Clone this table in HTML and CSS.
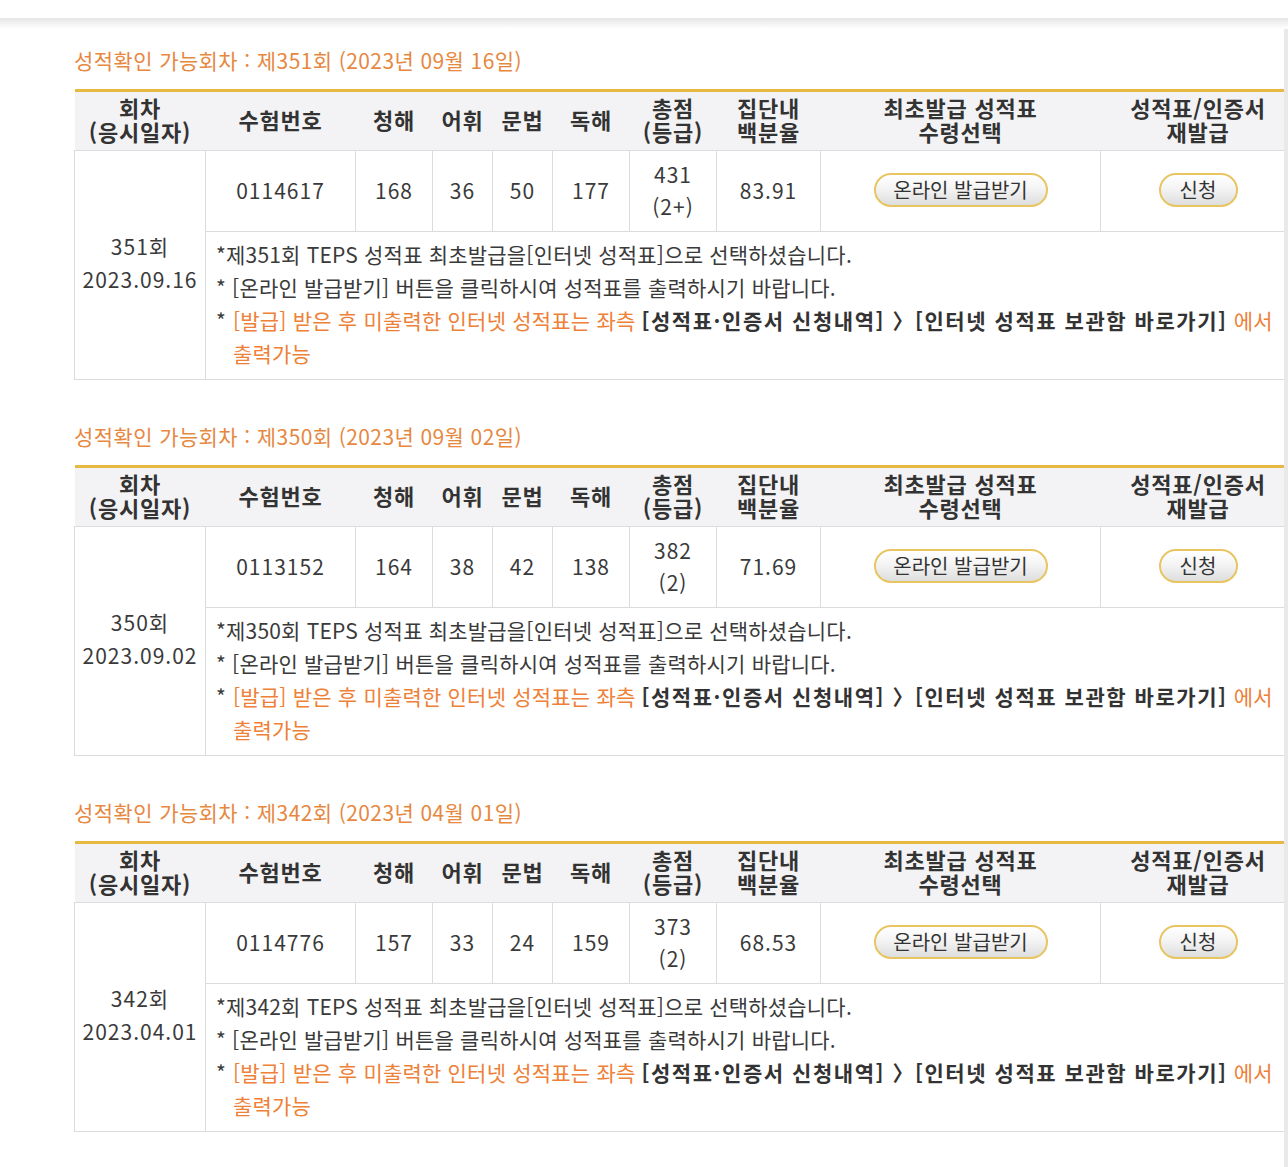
FILE: index.html
```html
<!DOCTYPE html>
<html lang="ko">
<head>
<meta charset="utf-8">
<title>성적확인</title>
<link rel="stylesheet" href="styles.css">
</head>
<body>
<div class="topbar"></div>
<div class="edge"></div>
<main class="page">

<section class="block">
  <h2 class="block-title">성적확인 가능회차 : 제351회 (2023년 09월 16일)</h2>
  <table class="score">
    <colgroup>
      <col class="c1"><col class="c2"><col class="c3"><col class="c4"><col class="c5"><col class="c6"><col class="c7"><col class="c8"><col class="c9"><col class="c10">
    </colgroup>
    <thead>
      <tr>
        <th>회차<br>(응시일자)</th><th>수험번호</th><th>청해</th><th>어휘</th><th>문법</th><th>독해</th><th>총점<br>(등급)</th><th>집단내<br>백분율</th><th>최초발급 성적표<br>수령선택</th><th>성적표/인증서<br>재발급</th>
      </tr>
    </thead>
    <tbody>
      <tr class="data">
        <td rowspan="2" class="round">351회<br>2023.09.16</td>
        <td>0114617</td><td>168</td><td>36</td><td>50</td><td>177</td><td class="total">431<br>(2+)</td><td>83.91</td>
        <td><button class="pill wide">온라인 발급받기</button></td>
        <td><button class="pill">신청</button></td>
      </tr>
      <tr>
        <td colspan="9" class="notes">
          <p>*제351회 TEPS 성적표 최초발급을[인터넷 성적표]으로 선택하셨습니다.</p>
          <p>* [온라인 발급받기] 버튼을 클릭하시여 성적표를 출력하시기 바랍니다.</p>
          <p class="hang"><span class="star">*</span><span class="orange">[발급] 받은 후 미출력한 인터넷 성적표는 좌측 <b class="dark">[성적표·인증서 신청내역] 〉[인터넷 성적표 보관함 바로가기]</b> 에서<br>출력가능</span></p>
        </td>
      </tr>
    </tbody>
  </table>
</section>

<section class="block">
  <h2 class="block-title">성적확인 가능회차 : 제350회 (2023년 09월 02일)</h2>
  <table class="score">
    <colgroup>
      <col class="c1"><col class="c2"><col class="c3"><col class="c4"><col class="c5"><col class="c6"><col class="c7"><col class="c8"><col class="c9"><col class="c10">
    </colgroup>
    <thead>
      <tr>
        <th>회차<br>(응시일자)</th><th>수험번호</th><th>청해</th><th>어휘</th><th>문법</th><th>독해</th><th>총점<br>(등급)</th><th>집단내<br>백분율</th><th>최초발급 성적표<br>수령선택</th><th>성적표/인증서<br>재발급</th>
      </tr>
    </thead>
    <tbody>
      <tr class="data">
        <td rowspan="2" class="round">350회<br>2023.09.02</td>
        <td>0113152</td><td>164</td><td>38</td><td>42</td><td>138</td><td class="total">382<br>(2)</td><td>71.69</td>
        <td><button class="pill wide">온라인 발급받기</button></td>
        <td><button class="pill">신청</button></td>
      </tr>
      <tr>
        <td colspan="9" class="notes">
          <p>*제350회 TEPS 성적표 최초발급을[인터넷 성적표]으로 선택하셨습니다.</p>
          <p>* [온라인 발급받기] 버튼을 클릭하시여 성적표를 출력하시기 바랍니다.</p>
          <p class="hang"><span class="star">*</span><span class="orange">[발급] 받은 후 미출력한 인터넷 성적표는 좌측 <b class="dark">[성적표·인증서 신청내역] 〉[인터넷 성적표 보관함 바로가기]</b> 에서<br>출력가능</span></p>
        </td>
      </tr>
    </tbody>
  </table>
</section>

<section class="block">
  <h2 class="block-title">성적확인 가능회차 : 제342회 (2023년 04월 01일)</h2>
  <table class="score">
    <colgroup>
      <col class="c1"><col class="c2"><col class="c3"><col class="c4"><col class="c5"><col class="c6"><col class="c7"><col class="c8"><col class="c9"><col class="c10">
    </colgroup>
    <thead>
      <tr>
        <th>회차<br>(응시일자)</th><th>수험번호</th><th>청해</th><th>어휘</th><th>문법</th><th>독해</th><th>총점<br>(등급)</th><th>집단내<br>백분율</th><th>최초발급 성적표<br>수령선택</th><th>성적표/인증서<br>재발급</th>
      </tr>
    </thead>
    <tbody>
      <tr class="data">
        <td rowspan="2" class="round">342회<br>2023.04.01</td>
        <td>0114776</td><td>157</td><td>33</td><td>24</td><td>159</td><td class="total">373<br>(2)</td><td>68.53</td>
        <td><button class="pill wide">온라인 발급받기</button></td>
        <td><button class="pill">신청</button></td>
      </tr>
      <tr>
        <td colspan="9" class="notes">
          <p>*제342회 TEPS 성적표 최초발급을[인터넷 성적표]으로 선택하셨습니다.</p>
          <p>* [온라인 발급받기] 버튼을 클릭하시여 성적표를 출력하시기 바랍니다.</p>
          <p class="hang"><span class="star">*</span><span class="orange">[발급] 받은 후 미출력한 인터넷 성적표는 좌측 <b class="dark">[성적표·인증서 신청내역] 〉[인터넷 성적표 보관함 바로가기]</b> 에서<br>출력가능</span></p>
        </td>
      </tr>
    </tbody>
  </table>
</section>

</main>
</body>
</html>
```

FILE: styles.css
```css
html, body {
  margin: 0;
  padding: 0;
  background: #fff;
  overflow: hidden;
}
body {
  font-family: "Noto Sans CJK KR", "Noto Sans", sans-serif;
  color: #333;
  width: 1288px;
}
.topbar {
  height: 18px;
  background: #fff;
  border-bottom: 1px solid #e2e2e2;
}
.topbar::after {
  content: "";
  display: block;
  position: relative;
  top: 18px;
  height: 11px;
  background: linear-gradient(#e6e6e6, #ffffff);
}
.edge {
  position: fixed;
  right: 0;
  top: 29px;
  bottom: 0;
  width: 4px;
  background: #e9e9e9;
}
.page {
  padding: 27px 0 0 74px;
}
.block {
  margin-bottom: 42px;
}
.block-title {
  margin: 0 0 15px;
  font-size: 21px;
  line-height: 28px;
  font-weight: 400;
  color: #e6883f;
  letter-spacing: 0.4px;
}
.score {
  width: 1221px;
  table-layout: fixed;
  border-collapse: collapse;
  border-top: 3px solid #e8b845;
  font-size: 21px;
}
.c1 { width: 131px; }
.c2 { width: 150px; }
.c3 { width: 77px; }
.c4 { width: 60px; }
.c5 { width: 60px; }
.c6 { width: 77px; }
.c7 { width: 87px; }
.c8 { width: 104px; }
.c9 { width: 280px; }
.c10 { width: 195px; }
.score th {
  background: #f3f3f5;
  font-weight: 700;
  font-size: 22px;
  letter-spacing: 0.8px;
  line-height: 24px;
  height: 60px;
  padding: 0 0 5px;
  box-sizing: border-box;
  text-align: center;
  color: #333;
  border-bottom: 1px solid #dcdcdc;
}
.score td {
  border: 1px solid #dcdcdc;
  text-align: center;
  padding: 0;
  color: #3a3a3a;
  font-weight: 400;
  letter-spacing: 1px;
}
.score tr.data td {
  height: 81px;
  box-sizing: border-box;
  padding-bottom: 3px;
  line-height: 32px;
}
.score tr.data td.round {
  line-height: 33px;
  padding-bottom: 5px;
}
.score td.notes {
  text-align: left;
  padding: 6px 0 9px 10px;
  line-height: 33px;
  color: #3a3a3a;
  letter-spacing: 0.2px;
}
.notes p {
  margin: 0;
}
.hang {
  display: flex;
}
.star {
  width: 17px;
  flex: none;
}
.orange {
  color: #ee8037;
}
.dark {
  color: #333;
  font-weight: 700;
  letter-spacing: 1.55px;
}
.pill {
  font-family: inherit;
  font-size: 20px;
  color: #333;
  height: 34px;
  line-height: 28px;
  padding: 0;
  width: 79px;
  border: 2px solid #e8c463;
  border-radius: 17px;
  background: linear-gradient(#ffffff 0%, #f4f4f4 45%, #dedede 100%);
  box-shadow: inset 0 1px 0 #fff;
  cursor: pointer;
  letter-spacing: 0;
}
.pill.wide {
  width: 174px;
}
```
